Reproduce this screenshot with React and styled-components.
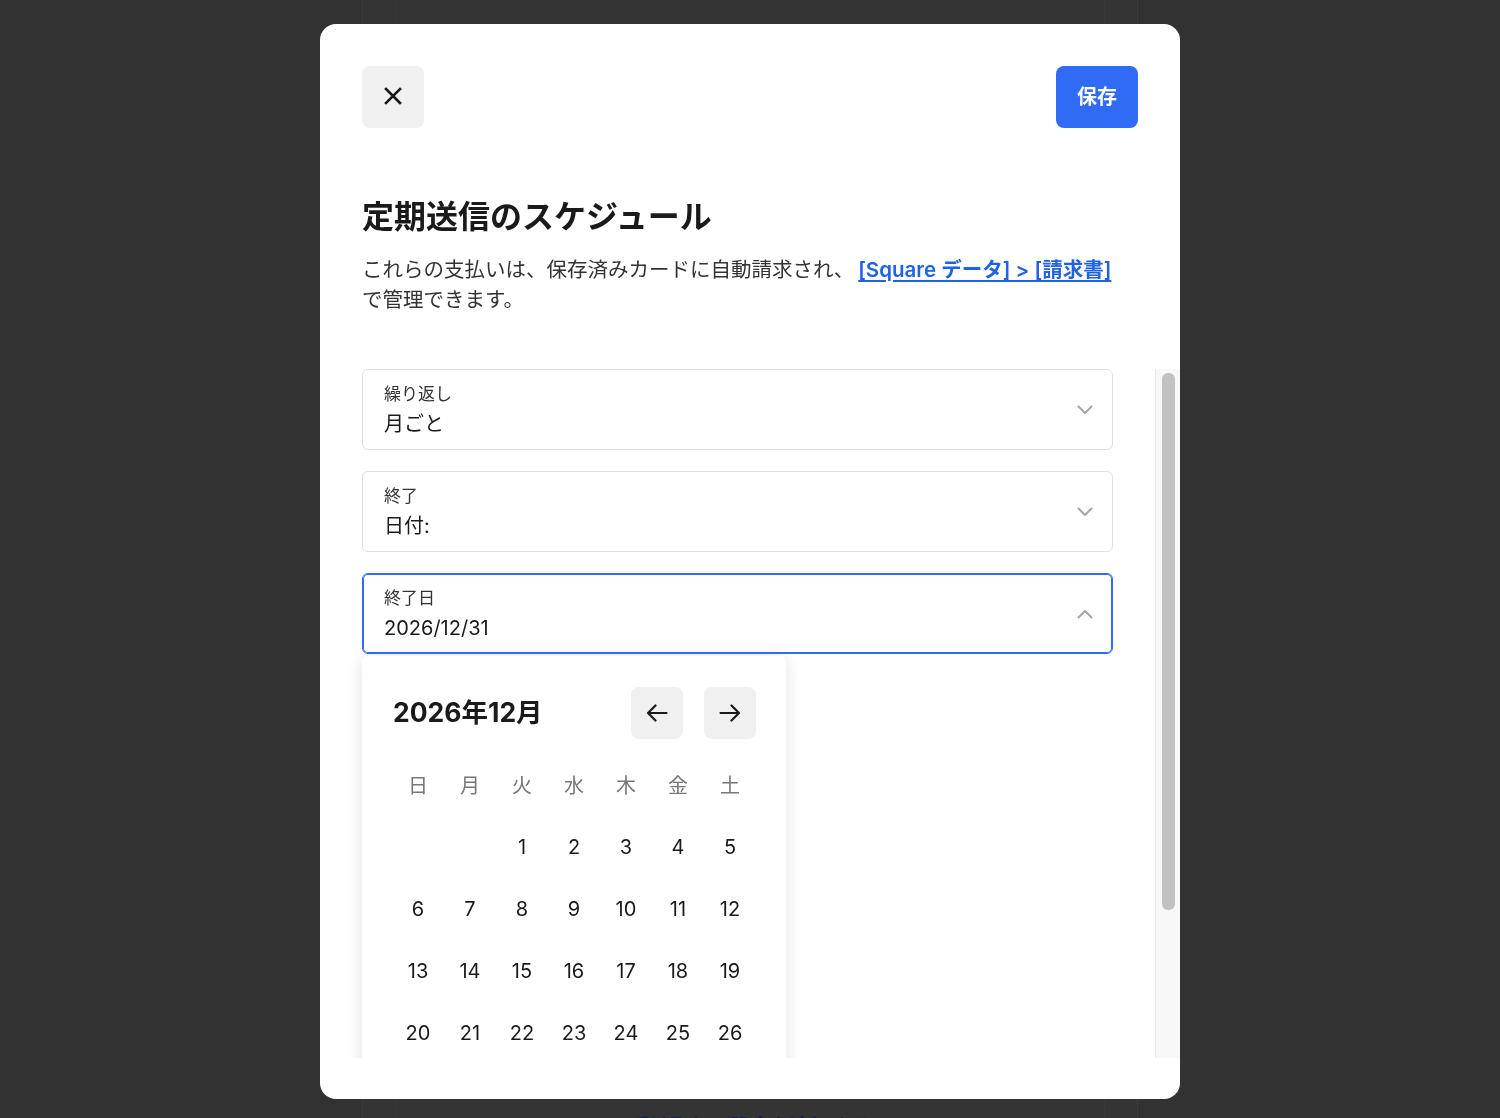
import React from "react";
import styled, { createGlobalStyle } from "styled-components";

const weekdays = ["日", "月", "火", "水", "木", "金", "土"];

// December 2026 starts on a Tuesday
const buildDays = () => {
  const cells = [null, null];
  for (let d = 1; d <= 31; d++) cells.push(d);
  return cells;
};

const ChevronIcon = ({ up }) => (
  <svg width="16" height="10" viewBox="0 0 16 10" fill="none">
    <path
      d={up ? "M1.5 8.5 8 2l6.5 6.5" : "M1.5 1.5 8 8l6.5-6.5"}
      stroke="#a6a6a6"
      strokeWidth="2"
      strokeLinecap="round"
      strokeLinejoin="round"
    />
  </svg>
);

const CloseIcon = () => (
  <svg width="18" height="18" viewBox="0 0 18 18" fill="none">
    <path d="M2 2l14 14M16 2 2 16" stroke="#1a1a1a" strokeWidth="2.6" strokeLinecap="square" />
  </svg>
);

const ArrowIcon = ({ dir }) => (
  <svg width="22" height="18" viewBox="0 0 22 18" fill="none">
    <path
      d={dir === "left" ? "M20.5 9H2M9.5 1.5 2 9l7.5 7.5" : "M1.5 9H20M12.5 1.5 20 9l-7.5 7.5"}
      stroke="#1a1a1a"
      strokeWidth="2.2"
      strokeLinecap="round"
      strokeLinejoin="round"
    />
  </svg>
);

const SelectField = ({ label, value, focused }) => (
  <Field $focused={focused}>
    <FieldText>
      <FieldLabel>{label}</FieldLabel>
      <FieldValue>{value}</FieldValue>
    </FieldText>
    <ChevronIcon up={focused} />
  </Field>
);

const App = () => {
  const days = buildDays();

  return (
    <>
      <GlobalStyle />
      <Backdrop>
        <PageColumn>
          <PageInner>
            <PageLink>受け取りの設定を追加する</PageLink>
          </PageInner>
        </PageColumn>
      </Backdrop>

      <Modal>
        <TopBar>
          <CloseButton aria-label="閉じる">
            <CloseIcon />
          </CloseButton>
          <SaveButton>保存</SaveButton>
        </TopBar>

        <Intro>
          <Title>定期送信のスケジュール</Title>
          <Description>
            これらの支払いは、保存済みカードに自動請求され、
            <Link href="#">[Square データ] &gt; [請求書]</Link>
            <br />
            で管理できます。
          </Description>
        </Intro>

        <Body>
          <Scroller>
            <Fields>
              <SelectField label="繰り返し" value="月ごと" />
              <SelectField label="終了" value="日付:" />
              <SelectField label="終了日" value="2026/12/31" focused />
            </Fields>

            <Calendar>
              <CalHeader>
                <MonthTitle>2026年12月</MonthTitle>
                <NavGroup>
                  <NavButton aria-label="前の月">
                    <ArrowIcon dir="left" />
                  </NavButton>
                  <NavButton aria-label="次の月">
                    <ArrowIcon dir="right" />
                  </NavButton>
                </NavGroup>
              </CalHeader>
              <DayGrid>
                {weekdays.map((w) => (
                  <Weekday key={w}>{w}</Weekday>
                ))}
                {days.map((d, i) => (
                  <Day key={i}>{d}</Day>
                ))}
              </DayGrid>
            </Calendar>
          </Scroller>
          <ScrollTrack>
            <ScrollThumb />
          </ScrollTrack>
        </Body>
      </Modal>
    </>
  );
};

export default App;

// Styled-components
const GlobalStyle = createGlobalStyle`
  * { box-sizing: border-box; }
  html, body {
    margin: 0;
    padding: 0;
    height: 100%;
    overflow: hidden;
  }
  body {
    background: #323232;
    font-family: Inter, "Noto Sans CJK JP", sans-serif;
    -webkit-font-smoothing: antialiased;
  }
`;

const Backdrop = styled.div`
  height: 100vh;
  display: flex;
  justify-content: center;
`;

const PageColumn = styled.div`
  width: 776px;
  height: 100%;
  padding: 0 32px;
  background: #343434;
  border-left: 1px solid #3a3a3a;
  border-right: 1px solid #3a3a3a;
`;

const PageInner = styled.div`
  height: 100%;
  border-left: 1px solid #383838;
  border-right: 1px solid #383838;
  display: flex;
  align-items: flex-end;
  justify-content: center;
  overflow: hidden;
`;

const PageLink = styled.span`
  color: #13224a;
  font-size: 20px;
  line-height: 28px;
  font-weight: 600;
  margin-bottom: -23px;
`;

const Modal = styled.div`
  position: fixed;
  top: 24px;
  left: calc(50% - 430px);
  width: 860px;
  height: 1075px;
  background: #ffffff;
  border-radius: 16px;
  display: flex;
  flex-direction: column;
  padding-bottom: 41px;
  overflow: hidden;
`;

const TopBar = styled.div`
  display: flex;
  justify-content: space-between;
  align-items: center;
  padding: 42px 42px 0;
`;

const CloseButton = styled.button`
  width: 62px;
  height: 62px;
  border: none;
  border-radius: 8px;
  background: #f0f0f0;
  display: flex;
  align-items: center;
  justify-content: center;
  padding: 0 0 2px;
  cursor: pointer;
`;

const SaveButton = styled.button`
  height: 62px;
  padding: 0 21px 4px;
  border: none;
  border-radius: 8px;
  background: #2f6bf5;
  color: #ffffff;
  font-family: Inter, "Noto Sans CJK JP", sans-serif;
  font-size: 20px;
  font-weight: 600;
  cursor: pointer;
`;

const Intro = styled.div`
  padding: 69px 42px 0;
`;

const Title = styled.h2`
  margin: 0;
  font-size: 32px;
  line-height: 40px;
  font-weight: 700;
  color: #1a1a1a;
`;

const Description = styled.p`
  margin: 18px 0 0;
  font-size: 20.5px;
  line-height: 30px;
  color: #333333;
  white-space: nowrap;
`;

const Link = styled.a`
  margin-left: 4px;
  color: #1f63e3;
  font-weight: 600;
  text-decoration: underline;
  text-underline-offset: 3px;
`;

const Body = styled.div`
  flex: 1;
  min-height: 0;
  margin-top: 54px;
  display: flex;
`;

const Scroller = styled.div`
  flex: 1;
  min-width: 0;
  overflow: hidden;
  padding: 0 42px;
`;

const ScrollTrack = styled.div`
  width: 25px;
  flex-shrink: 0;
  background: #f8f8f8;
  border-left: 1px solid #e8e8e8;
  padding: 4px 5px 0 6px;
`;

const ScrollThumb = styled.div`
  height: 537px;
  border-radius: 6px;
  background: #c1c1c1;
`;

const Fields = styled.div`
  display: flex;
  flex-direction: column;
  gap: 21px;
`;

const Field = styled.div`
  height: 81px;
  border: 1px solid ${({ $focused }) => ($focused ? "#2f6bf5" : "#e0e0e0")};
  box-shadow: ${({ $focused }) => ($focused ? "inset 0 0 0 1px #2f6bf5" : "none")};
  border-radius: 6px;
  padding: 0 19px 0 21px;
  display: flex;
  align-items: center;
  justify-content: space-between;
`;

const FieldText = styled.div`
  display: flex;
  flex-direction: column;
`;

const FieldLabel = styled.span`
  font-size: 17px;
  line-height: 26px;
  color: #333333;
`;

const FieldValue = styled.span`
  font-size: 20px;
  line-height: 30px;
  color: #1a1a1a;
  padding-top: 2px;
`;

const Calendar = styled.div`
  width: 424px;
  margin-top: 2px;
  padding: 31px 30px 30px;
  background: #ffffff;
  border-radius: 6px;
  box-shadow: 0 2px 16px rgba(0, 0, 0, 0.12);
`;

const CalHeader = styled.div`
  display: flex;
  align-items: center;
  justify-content: space-between;
  height: 52px;
`;

const MonthTitle = styled.div`
  padding: 0 0 5px 1px;
  font-size: 26.5px;
  font-weight: 700;
  color: #1a1a1a;
`;

const NavGroup = styled.div`
  display: flex;
  gap: 21px;
`;

const NavButton = styled.button`
  width: 52px;
  height: 52px;
  border: none;
  border-radius: 8px;
  background: #f0f0f0;
  display: flex;
  align-items: center;
  justify-content: center;
  padding: 0;
  cursor: pointer;
`;

const DayGrid = styled.div`
  display: grid;
  grid-template-columns: repeat(7, 52px);
  margin-top: 13px;
`;

const Weekday = styled.div`
  height: 64px;
  display: flex;
  align-items: center;
  justify-content: center;
  font-size: 20px;
  color: #777777;
`;

const Day = styled.div`
  height: 62px;
  display: flex;
  align-items: center;
  justify-content: center;
  font-size: 20px;
  color: #1a1a1a;
`;
